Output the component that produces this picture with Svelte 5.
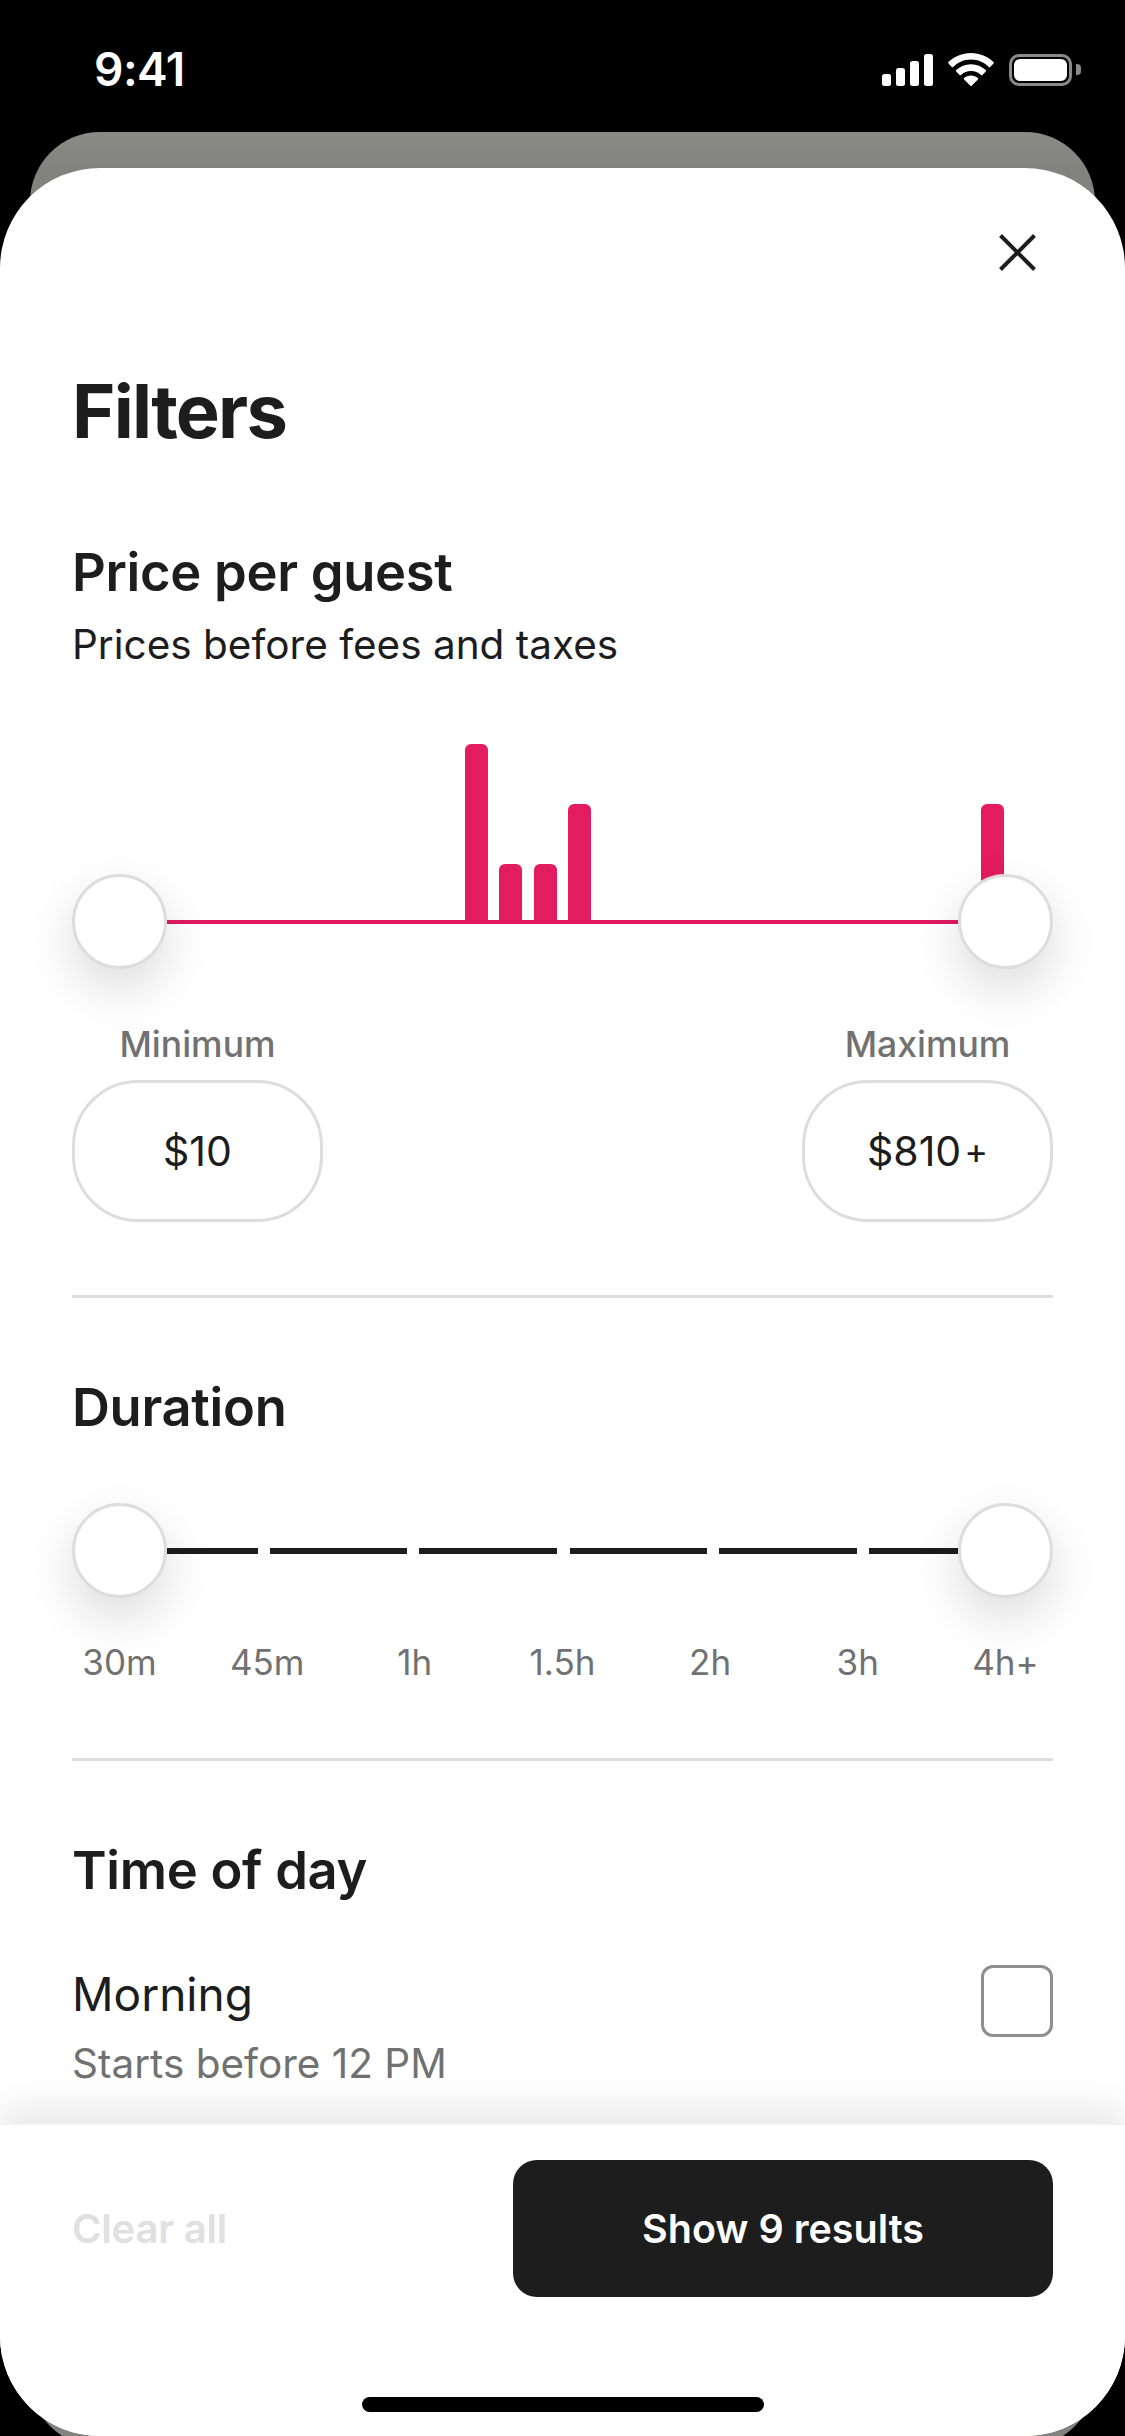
<script>
  const bars = Array.from({ length: 26 }, (_, i) => ({ 10: 178, 11: 58, 12: 58, 13: 118, 25: 118 })[i] ?? 0);
  const segments = [91, 137, 138, 137, 138, 89];
  const durations = ['30m', '45m', '1h', '1.5h', '2h', '3h', '4h+'];
</script>

<div class="screen">
  <div class="back-card"></div>

  <header class="status">
    <span class="time">9:41</span>
    <div class="status-icons">
      <svg width="51" height="32" viewBox="0 0 51 32" fill="#fff">
        <rect x="0" y="20" width="9" height="12" rx="2.5" />
        <rect x="14" y="14" width="9" height="18" rx="2.5" />
        <rect x="28" y="7" width="9" height="25" rx="2.5" />
        <rect x="42" y="0" width="9" height="32" rx="2.5" />
      </svg>
      <svg width="46" height="33" viewBox="0 0 46 33" fill="#fff">
        <path d="M23 0c8.800 0 16.700 3.500 22.500 9.100a1 1 0 0 1 0 1.400l-3.300 3.400a1 1 0 0 1-1.400 0C36.100 9.400 29.900 6.600 23 6.600S9.900 9.400 5.200 13.900a1 1 0 0 1-1.400 0L.5 10.500a1 1 0 0 1 0-1.400C6.300 3.500 14.200 0 23 0z" />
        <path d="M23 11.200c5.700 0 10.900 2.200 14.800 5.900a1 1 0 0 1 0 1.400l-3.400 3.400a1 1 0 0 1-1.400 0C30.400 19.400 26.900 18 23 18s-7.400 1.400-10 3.900a1 1 0 0 1-1.400 0l-3.400-3.400a1 1 0 0 1 0-1.400c3.900-3.700 9.100-5.900 14.800-5.900z" />
        <path d="M23 22.400c2.700 0 5.100 1 6.900 2.700a1 1 0 0 1 0 1.400l-6.200 6.200a1 1 0 0 1-1.400 0l-6.200-6.200a1 1 0 0 1 0-1.400c1.800-1.700 4.200-2.700 6.900-2.700z" />
      </svg>
      <div class="battery"><div class="charge"></div></div>
      <div class="nub"></div>
    </div>
  </header>

  <main class="sheet">
    <div class="scroll">
      <div class="close-row">
        <svg width="37" height="37" viewBox="0 0 37 37" fill="none" stroke="#1d1d1d" stroke-width="4">
          <path d="M1.500 1.500l34 34M35.500 1.500l-34 34" />
        </svg>
      </div>

      <h1>Filters</h1>

      <h2 class="price-title">Price per guest</h2>
      <p class="subtitle">Prices before fees and taxes</p>

      <div class="histogram">
        {#each bars as h}
          <div class="bar" style="height: {h}px"></div>
        {/each}
      </div>
      <div class="slider price-slider">
        <div class="handle"></div>
        <div class="line pink"></div>
        <div class="handle"></div>
      </div>

      <div class="range-inputs">
        <div class="range-field">
          <span class="range-label">Minimum</span>
          <div class="range-box">$10</div>
        </div>
        <div class="range-field">
          <span class="range-label">Maximum</span>
          <div class="range-box">$810<span class="plus">+</span></div>
        </div>
      </div>

      <hr class="first-rule" />

      <h2 class="section-title">Duration</h2>
      <div class="slider duration-slider">
        <div class="handle"></div>
        <div class="segments">
          {#each segments as w}
            <div class="segment" style="width: {w}px"></div>
          {/each}
        </div>
        <div class="handle"></div>
      </div>
      <div class="duration-labels">
        {#each durations as d}
          <span>{d}</span>
        {/each}
      </div>

      <hr class="second-rule" />

      <h2 class="section-title">Time of day</h2>
      <div class="option">
        <div>
          <div class="option-title">Morning</div>
          <div class="option-sub">Starts before 12 PM</div>
        </div>
        <div class="checkbox"></div>
      </div>
    </div>

    <footer class="footer">
      <div class="actions">
        <span class="clear">Clear all</span>
        <button class="show">Show 9 results</button>
      </div>
      <div class="home-bar"></div>
    </footer>
  </main>
</div>

<style>
  :global(body) {
    margin: 0;
    background: #000;
  }

  .screen {
    position: relative;
    width: 1125px;
    height: 2436px;
    overflow: hidden;
    background: #000;
    font-family: Inter, "Noto Sans", sans-serif;
    color: #1d1d1d;
  }

  .back-card {
    position: absolute;
    top: 132px;
    left: 30px;
    right: 30px;
    bottom: -11px;
    border-radius: 70px;
    background: linear-gradient(#8b8b86, #82827e 36px);
  }

  .status {
    position: relative;
    height: 168px;
    box-sizing: border-box;
    padding: 53px 44px 0 94px;
    display: flex;
    justify-content: space-between;
    align-items: flex-start;
    color: #fff;
  }

  .time {
    font-size: 46px;
    line-height: 32px;
    font-weight: 600;
    letter-spacing: -0.5px;
  }

  .status-icons {
    display: flex;
    align-items: center;
    height: 33px;
  }

  .status-icons svg:first-child {
    margin-right: 15px;
  }

  .battery {
    margin-left: 15px;
    width: 63px;
    height: 32px;
    box-sizing: border-box;
    border: 3px solid #8a8a8a;
    border-radius: 10px;
    padding: 2px;
  }

  .charge {
    height: 100%;
    background: #fff;
    border-radius: 6px;
  }

  .nub {
    width: 5px;
    height: 11px;
    margin-left: 4px;
    background: #8a8a8a;
    border-radius: 0 4px 4px 0;
  }

  .sheet {
    position: relative;
    height: 2268px;
    display: flex;
    flex-direction: column;
    background: #fff;
    border-radius: 100px;
    overflow: hidden;
  }

  .scroll {
    flex: 1;
    min-height: 0;
    overflow: hidden;
    padding: 66px 72px 0;
  }

  .close-row {
    display: flex;
    justify-content: flex-end;
    height: 37px;
    padding-right: 17px;
  }

  h1 {
    margin: 95px 0 0;
    font-size: 74px;
    line-height: 90px;
    font-weight: 700;
    letter-spacing: -1.8px;
  }

  h2 {
    margin: 0;
    font-size: 52.500px;
    line-height: 64px;
    font-weight: 600;
    letter-spacing: -0.3px;
  }

  .price-title {
    margin-top: 84px;
  }

  .subtitle {
    margin: 13px 0 0;
    font-size: 40.500px;
    line-height: 56px;
  }

  .histogram {
    margin: 71px 0 0 49px;
    height: 178px;
    display: flex;
    align-items: flex-end;
    gap: 11.500px;
  }

  .bar {
    width: 22.900px;
    background: #e31c5f;
    border-radius: 6px 6px 0 0;
  }

  .slider {
    position: relative;
    display: flex;
    align-items: center;
    height: 95px;
  }

  .price-slider {
    margin-top: -48px;
  }

  .duration-slider {
    margin-top: 64px;
  }

  .handle {
    flex: none;
    width: 95px;
    height: 95px;
    box-sizing: border-box;
    background: #fff;
    border: 3px solid #ddd;
    border-radius: 50%;
    box-shadow: 0 20px 50px rgba(0, 0, 0, 0.14);
    position: relative;
    z-index: 1;
  }

  .line {
    flex: 1;
    height: 4px;
  }

  .pink {
    background: #e01b60;
  }

  .segments {
    flex: 1;
    display: flex;
    justify-content: space-between;
  }

  .segment {
    height: 6px;
    background: #1d1d1d;
  }

  .range-inputs {
    margin-top: 54px;
    display: flex;
    justify-content: space-between;
  }

  .range-field {
    width: 251px;
    display: flex;
    flex-direction: column;
    align-items: center;
    gap: 13px;
  }

  .range-label {
    font-size: 35.500px;
    line-height: 44px;
    color: #717171;
    font-weight: 500;
  }

  .range-box {
    width: 100%;
    height: 142px;
    box-sizing: border-box;
    border: 3px solid #ddd;
    border-radius: 66px;
    display: flex;
    align-items: center;
    justify-content: center;
    font-size: 41px;
  }

  .plus {
    font-size: 36px;
    margin-left: 3px;
  }

  hr {
    margin: 0;
    border: 0;
    height: 3px;
    background: #ddd;
  }

  .first-rule {
    margin-top: 73px;
  }

  .second-rule {
    margin-top: 74px;
  }

  .section-title {
    margin-top: 77px;
  }

  .duration-labels {
    margin-top: 42px;
    display: flex;
    justify-content: space-between;
    font-size: 35px;
    line-height: 44px;
    color: #717171;
  }

  .duration-labels span {
    width: 95px;
    text-align: center;
  }

  .option {
    margin-top: 63px;
    display: flex;
    justify-content: space-between;
    align-items: flex-start;
  }

  .option-title {
    margin-top: -1px;
    font-size: 46px;
    line-height: 60px;
  }

  .option-sub {
    margin-top: 15px;
    font-size: 40.500px;
    line-height: 50px;
    color: #717171;
  }

  .checkbox {
    width: 72px;
    height: 72px;
    box-sizing: border-box;
    border: 3px solid #8f8f8f;
    border-radius: 12px;
  }

  .footer {
    position: relative;
    flex: none;
    height: 313px;
    box-sizing: border-box;
    padding: 35px 72px 24px;
    background: #fff;
    border-top: 2px solid #f2f2f2;
    box-shadow: 0 -16px 32px rgba(0, 0, 0, 0.09);
    display: flex;
    flex-direction: column;
    justify-content: space-between;
  }

  .actions {
    display: flex;
    justify-content: space-between;
    align-items: center;
  }

  .clear {
    font-size: 40px;
    font-weight: 600;
    color: #e0e0e0;
    letter-spacing: -0.2px;
  }

  .show {
    width: 540px;
    height: 137px;
    border: 0;
    border-radius: 24px;
    background: #1d1d1d;
    color: #fff;
    font-family: inherit;
    font-size: 39.500px;
    font-weight: 600;
  }

  .home-bar {
    align-self: center;
    width: 402px;
    height: 15px;
    border-radius: 8px;
    background: #000;
  }
</style>
